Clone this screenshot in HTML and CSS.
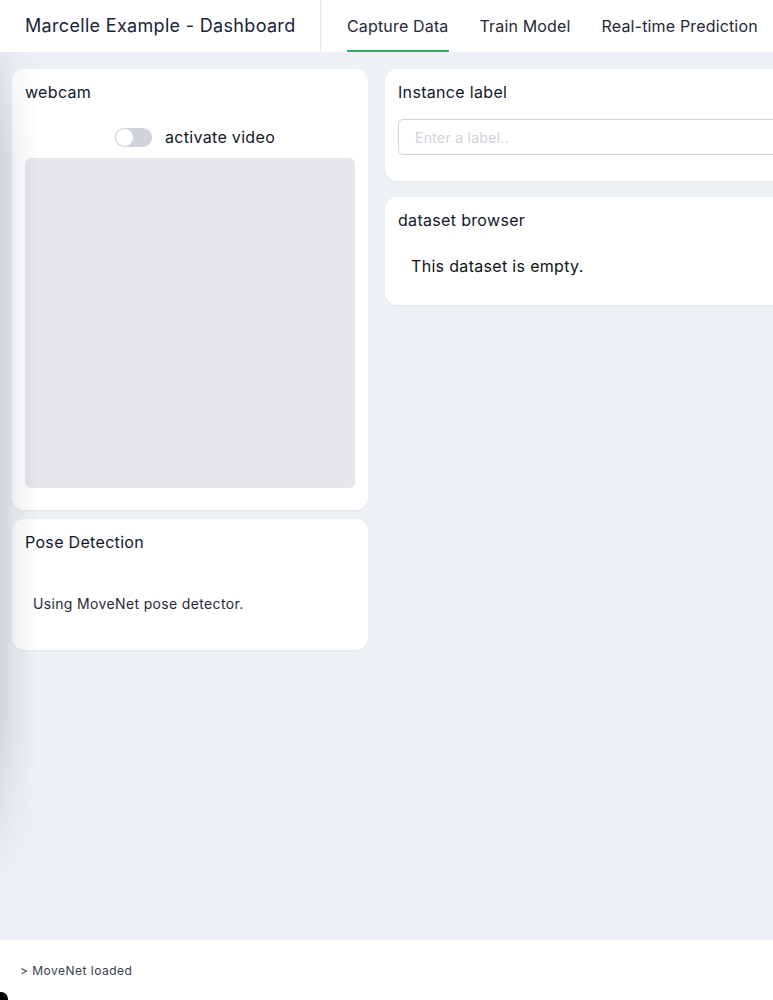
FILE: index.html
```html
<!DOCTYPE html>
<html lang="en">
<head>
<meta charset="utf-8">
<title>Marcelle Example - Dashboard</title>
<link rel="stylesheet" href="styles.css">
</head>
<body>
<div class="page">
  <header class="header">
    <div class="brand">Marcelle Example - Dashboard</div>
    <nav class="tabs">
      <a class="tab active">Capture Data</a>
      <a class="tab">Train Model</a>
      <a class="tab">Real-time Prediction</a>
    </nav>
  </header>
  <main class="main">
    <div class="col col-left">
      <section class="card card-webcam">
        <h2 class="card-title">webcam</h2>
        <div class="toggle-row">
          <span class="switch"><span class="knob"></span></span>
          <span class="toggle-label">activate video</span>
        </div>
        <div class="video-box"></div>
      </section>
      <section class="card card-pose">
        <h2 class="card-title">Pose Detection</h2>
        <p class="pose-text">Using MoveNet pose detector.</p>
      </section>
    </div>
    <div class="col col-right">
      <section class="card card-label">
        <h2 class="card-title">Instance label</h2>
        <input class="text-input" type="text" placeholder="Enter a label..">
      </section>
      <section class="card card-dataset">
        <h2 class="card-title">dataset browser</h2>
        <p class="empty-text">This dataset is empty.</p>
      </section>
    </div>
  </main>
  <footer class="footer">&gt; MoveNet loaded</footer>
  <div class="edge-shadow"></div>
  <div class="corner"></div>
</div>
</body>
</html>
```

FILE: styles.css
```css
* { box-sizing: border-box; }
html, body {
  margin: 0;
  padding: 0;
  height: 1000px;
  overflow: hidden;
  background: #edf1f5;
  font-family: Inter, "Noto Sans", "Liberation Sans", sans-serif;
  color: #111827;
  letter-spacing: 0.02em;
}
.page {
  position: relative;
  display: flex;
  flex-direction: column;
  height: 1000px;
  width: 773px;
  overflow: hidden;
}
.header {
  display: flex;
  height: 52px;
  background: #ffffff;
  flex-shrink: 0;
}
.brand {
  width: 321px;
  padding-left: 25px;
  display: flex;
  align-items: center;
  font-size: 18px;
  color: #1a2438;
  border-right: 1px solid #e5e7eb;
  flex-shrink: 0;
  padding-bottom: 1px;
}
.tabs {
  display: flex;
  gap: 31px;
  padding-left: 26px;
  white-space: nowrap;
}
.tab {
  display: flex;
  align-items: center;
  font-size: 16px;
  letter-spacing: 0.01em;
  color: #1f2937;
  border-bottom: 2px solid transparent;
  padding-top: 2px;
}
.tab.active {
  border-bottom-color: #2fad6b;
}
.main {
  flex: 1;
  display: flex;
  gap: 17px;
  padding: 17px 12px;
  width: 1100px;
}
.col {
  display: flex;
  flex-direction: column;
}
.col-left { width: 356px; gap: 9px; flex-shrink: 0; }
.col-right { flex: 1; gap: 16px; }
.card {
  background: #ffffff;
  border-radius: 12px;
  padding: 12px 13px;
  box-shadow: 0 1px 2px rgba(15, 23, 42, 0.05);
}
.card-title {
  margin: 0;
  font-size: 16px;
  font-weight: 400;
  line-height: 22px;
  color: #0f172a;
}
.toggle-row {
  display: flex;
  justify-content: center;
  align-items: center;
  gap: 13px;
  height: 24px;
  margin-top: 22px;
  padding-left: 10px;
}
.switch {
  position: relative;
  width: 37px;
  height: 19px;
  border-radius: 10px;
  background: #d1d5db;
}
.knob {
  position: absolute;
  left: 0;
  top: 0;
  width: 19px;
  height: 19px;
  border-radius: 50%;
  background: #ffffff;
  border: 1px solid #d1d5db;
}
.toggle-label {
  font-size: 16px;
  color: #111827;
}
.video-box {
  margin-top: 9px;
  height: 330px;
  border-radius: 6px;
  background: #e5e7eb;
}
.card-webcam { padding-bottom: 22px; }
.pose-text {
  margin: 41px 0 0;
  padding-left: 8px;
  font-size: 14px;
  letter-spacing: 0.025em;
  line-height: 20px;
  color: #1f2937;
}
.card-pose { padding-bottom: 36px; }
.text-input {
  display: block;
  width: 100%;
  margin-top: 16px;
  height: 36px;
  border: 1px solid #d1d5db;
  border-radius: 5px;
  padding: 0 16px;
  font-family: inherit;
  font-size: 14px;
  letter-spacing: 0.02em;
  color: #111827;
  outline: none;
  background: #fff;
}
.text-input::placeholder { color: #cfd3d9; }
.card-label { padding-bottom: 26px; }
.empty-text {
  margin: 23px 0 0;
  padding-left: 13px;
  font-size: 16px;
  line-height: 24px;
  color: #111111;
}
.card-dataset { padding-bottom: 27px; }
.footer {
  height: 60px;
  flex-shrink: 0;
  background: #ffffff;
  display: flex;
  align-items: center;
  padding-left: 20px;
  font-size: 12px;
  letter-spacing: 0.04em;
  color: #374151;
}
.edge-shadow {
  position: absolute;
  left: 0;
  top: 52px;
  width: 40px;
  height: 830px;
  background: linear-gradient(to right, rgba(60, 70, 85, 0.16), rgba(60, 70, 85, 0.08) 14px, rgba(60, 70, 85, 0) 38px);
  -webkit-mask-image: linear-gradient(to bottom, rgba(0,0,0,0.3), #000 12%, #000 80%, rgba(0,0,0,0));
  mask-image: linear-gradient(to bottom, rgba(0,0,0,0.3), #000 12%, #000 80%, rgba(0,0,0,0));
  pointer-events: none;
}
.corner {
  position: absolute;
  left: -6px;
  bottom: -6px;
  width: 14px;
  height: 14px;
  border-radius: 50%;
  background: #000;
}
```
